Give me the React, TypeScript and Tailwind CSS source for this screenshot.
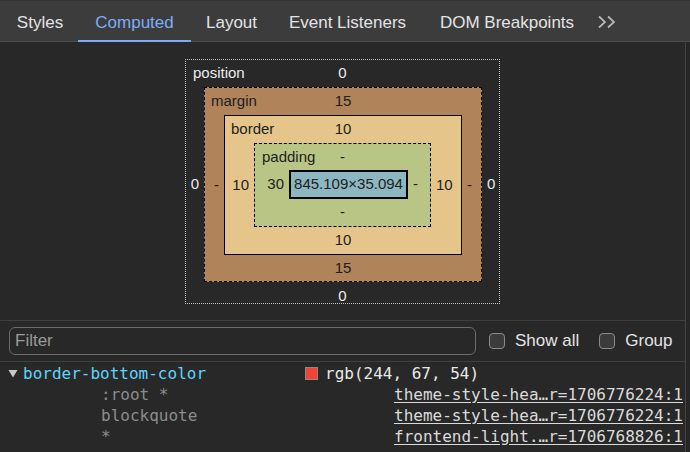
import React from "react";

function Chevrons() {
  return (
    <svg width="20" height="14" viewBox="0 0 20 14" fill="none" stroke="#b8b8b8" strokeWidth="1.7">
      <path d="M2 1.5 L8 7 L2 12.5" />
      <path d="M11 1.5 L17 7 L11 12.5" />
    </svg>
  );
}

function Tab({ label, w, active }: { label: string; w: string; active?: boolean }) {
  return (
    <div
      className={
        "flex items-center justify-center pt-[4px] -mb-px border-b-2 " +
        w +
        (active ? " border-[#7cacf8] text-[#7cacf8]" : " border-transparent text-[#e3e3e3]")
      }
    >
      {label}
    </div>
  );
}

function TopRow({ label, value, h, pl, light }: { label: string; value: string; h: string; pl: string; light?: boolean }) {
  return (
    <div className={"grid grid-cols-[1fr_auto_1fr] items-center " + h + (light ? " text-[#ececec]" : "")}>
      <span className={pl}>{label}</span>
      <span>{value}</span>
      <span />
    </div>
  );
}

export default function App() {
  return (
    <div className="w-[690px] h-[452px] overflow-hidden bg-[#282828] flex flex-col font-['Liberation_Sans',Arial,sans-serif]">
      {/* Tabs */}
      <div className="flex h-[42px] shrink-0 bg-[#3c3c3c] border-t border-t-[#333333] border-b border-b-[#4a4a4a] pl-[2px] text-[17px]">
        <Tab label="Styles" w="w-[76px]" />
        <Tab label="Computed" w="w-[113px]" active />
        <Tab label="Layout" w="w-[81px]" />
        <Tab label="Event Listeners" w="w-[151px]" />
        <Tab label="DOM Breakpoints" w="w-[168px]" />
        <div className="flex items-center justify-center w-[32px] pt-[2px]">
          <Chevrons />
        </div>
      </div>

      <div className="flex flex-1 min-h-0">
        <div className="w-[685px] shrink-0 flex flex-col">
          {/* Box model */}
          <div className="h-[278px] shrink-0 flex justify-center pt-[17px] text-[15px] text-[#1e1e1e]">
            <div className="flex flex-col w-[315px] h-[245px] border border-dotted border-[#c4c4c4]">
              <TopRow label="position" value="0" h="h-[27px]" pl="pl-[7px]" light />
              <div className="flex">
                <div className="w-[18px] flex items-center justify-end pr-[5px] text-[#ececec]">0</div>
                {/* margin */}
                <div className="flex flex-col w-[278px] h-[195px] border border-dashed border-black bg-[#b0835a]">
                  <TopRow label="margin" value="15" h="h-[27px]" pl="pl-[6px]" />
                  <div className="flex">
                    <div className="w-[19px] flex items-center justify-end pr-[5px]">-</div>
                    {/* border */}
                    <div className="flex flex-col w-[238px] h-[140px] border border-black bg-[#e6c58a]">
                      <TopRow label="border" value="10" h="h-[27px]" pl="pl-[6px]" />
                      <div className="flex">
                        <div className="w-[29px] flex items-center justify-end pr-[5px]">10</div>
                        {/* padding */}
                        <div className="flex flex-col w-[177px] h-[84px] border border-dashed border-black bg-[#b9c585]">
                          <TopRow label="padding" value="-" h="h-[26px]" pl="pl-[7px]" />
                          <div className="flex">
                            <div className="w-[34px] flex items-center justify-end pr-[5px]">30</div>
                            <div className="w-[119px] h-[29px] border-2 border-black bg-[#8cb6c0] flex items-center justify-center text-[15px]">
                              845.109×35.094
                            </div>
                            <div className="w-[22px] flex items-center justify-start pl-[5px]">-</div>
                          </div>
                          <div className="h-[27px] flex items-center justify-center">-</div>
                        </div>
                        <div className="w-[30px] flex items-center justify-start pl-[5px]">10</div>
                      </div>
                      <div className="h-[27px] flex items-center justify-center">10</div>
                    </div>
                    <div className="w-[19px] flex items-center justify-start pl-[5px]">-</div>
                  </div>
                  <div className="h-[26px] flex items-center justify-center">15</div>
                </div>
                <div className="w-[17px] flex items-center justify-start pl-[5px] text-[#ececec]">0</div>
              </div>
              <div className="h-[21px] pt-[8px] flex items-center justify-center text-[#ececec]">0</div>
            </div>
          </div>

          {/* Filter row */}
          <div className="h-[42px] shrink-0 flex items-center border-t border-b border-[#3f3f3f] text-[17px] text-[#e3e3e3]">
            <div className="ml-[9px] w-[467px] h-[28px] rounded-[6px] border border-[#6b6b6b] flex items-center pl-[5px]">
              <input
                readOnly
                placeholder="Filter"
                className="w-full bg-transparent outline-none text-[17px] placeholder:text-[#9a9a9a]"
              />
            </div>
            <div className="ml-[13px] w-[16px] h-[16px] rounded-[4px] border border-[#8a8a8a] bg-[#3b3b3b]" />
            <span className="ml-[10px]">Show all</span>
            <div className="ml-[20px] w-[16px] h-[16px] rounded-[4px] border border-[#8a8a8a] bg-[#3b3b3b]" />
            <span className="ml-[10px]">Group</span>
          </div>

          {/* Properties */}
          <div className="pt-[1px] font-['DejaVu_Sans_Mono',monospace] text-[16px] leading-[21px]">
            <div className="flex items-center h-[21px]">
              <div className="w-[23px] pl-[8px] flex items-center">
                <svg width="10" height="9" viewBox="0 0 10 9">
                  <path d="M0.5 1 L9.5 1 L5 8.5 Z" fill="#c9c9c9" />
                </svg>
              </div>
              <div className="w-[282px] text-[#5cd5fb]">border-bottom-color</div>
              <div className="w-[13px] h-[13px] bg-[#f44336] border border-[#8a8a8a]" />
              <div className="ml-[7px] text-[#e8e8e8]">rgb(244, 67, 54)</div>
            </div>
            {[
              [":root *", "theme-style-hea…r=1706776224:1"],
              ["blockquote", "theme-style-hea…r=1706776224:1"],
              ["*", "frontend-light.…r=1706768826:1"],
            ].map(([sel, link]) => (
              <div key={sel} className="flex h-[21px] pl-[101px] pr-[2px]">
                <div className="flex-1 text-[#8c8c8c]">{sel}</div>
                <div className="text-[#dadada] underline underline-offset-2">{link}</div>
              </div>
            ))}
            <div className="flex items-center h-[21px] mt-[1px]">
              <div className="w-[23px] pl-[9px] flex items-center">
                <svg width="9" height="10" viewBox="0 0 9 10">
                  <path d="M1 0.5 L8.5 5 L1 9.5 Z" fill="#c9c9c9" />
                </svg>
              </div>
              <div className="w-[297px] text-[#5cd5fb]">border-bottom-left-radius</div>
              <div className="text-[#e8e8e8]">0px</div>
            </div>
          </div>
        </div>
        <div className="flex-1 border-l border-[#454545] bg-[#262626]" />
      </div>
    </div>
  );
}
